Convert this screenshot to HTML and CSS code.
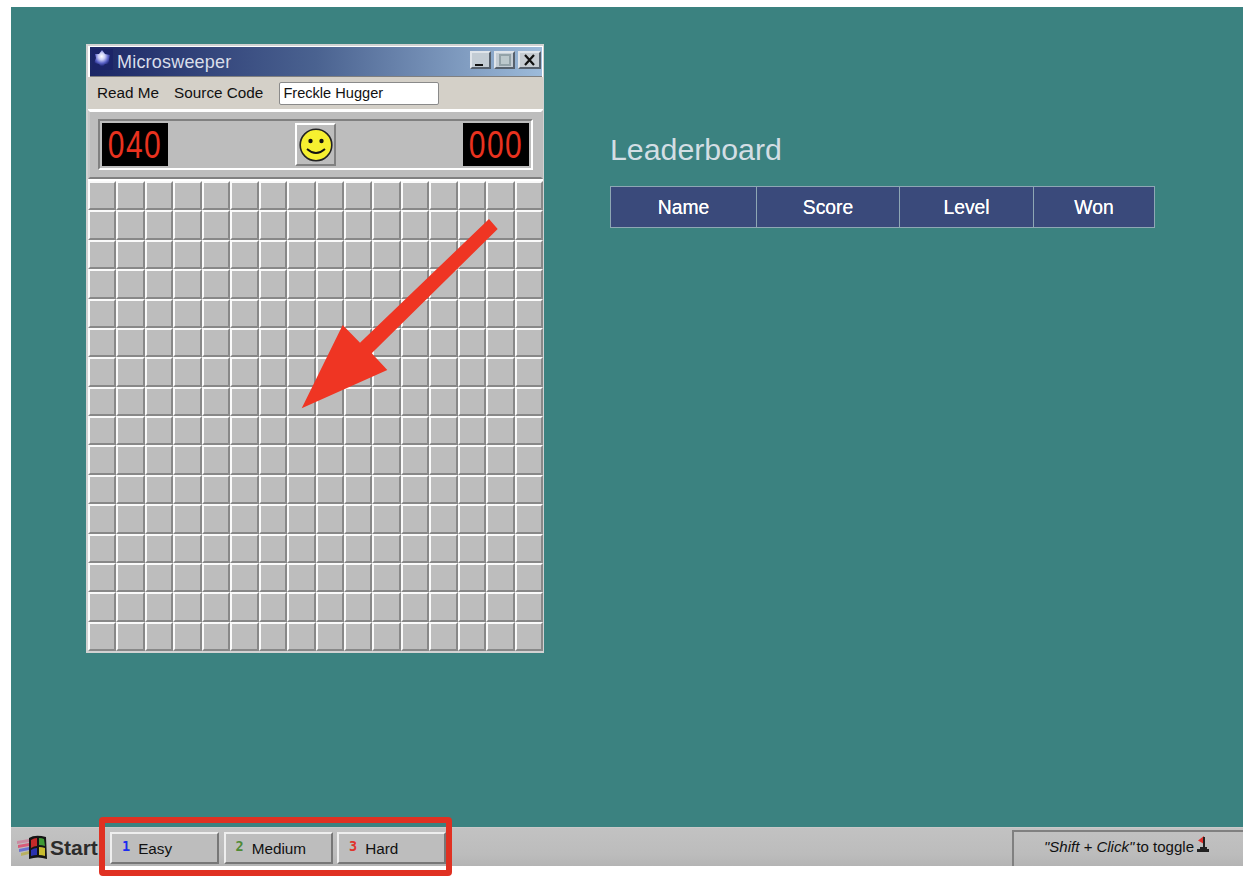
FILE: index.html
```html
<!DOCTYPE html>
<html lang="en">

<head>
    <title>Microsweeper</title>
    <meta charset="utf-8">
    <link rel="stylesheet" href="styles.css">
</head>

<body>
    <div class="desktop">
        <div class="main">
            <div class="window">
                <div class="titlebar">
                    <svg class="title-icon" width="21" height="21" viewBox="0 0 21 21">
                        <defs>
                            <radialGradient id="globe" cx="45%" cy="35%" r="55%">
                                <stop offset="0" stop-color="#fff" />
                                <stop offset="0.35" stop-color="#c9cdf5" />
                                <stop offset="0.7" stop-color="#5a62c8" />
                                <stop offset="1" stop-color="#1a2270" />
                            </radialGradient>
                        </defs>
                        <rect width="21" height="21" fill="#1b2468" />
                        <polygon points="10,1 13,5 18,6 17,11 19,15 13,15 10,19 7,15 2,14 4,9 3,5 7,5" fill="url(#globe)" />
                    </svg>
                    <span class="title-text">Microsweeper</span>
                    <div class="title-buttons">
                        <div class="win-btn"><span class="min-mark"></span></div>
                        <div class="win-btn"><span class="max-mark"></span></div>
                        <div class="win-btn win-btn-close">
                            <svg width="13" height="12" viewBox="0 0 13 12">
                                <path d="M2 1 L11 11 M11 1 L2 11" stroke="#111" stroke-width="2.2" fill="none" />
                            </svg>
                        </div>
                    </div>
                </div>
                <div class="menu">
                    <span class="menu-item">Read Me</span>
                    <span class="menu-item">Source Code</span>
                    <input class="name-input" value="Freckle Hugger">
                </div>
                <div class="panel">
                    <div class="panel-inner">
                        <div class="led"><span class="led-digits">040</span></div>
                        <div class="smiley">
                            <svg width="34" height="34" viewBox="0 0 34 34">
                                <circle cx="17" cy="17" r="15.8" fill="#f6f030" stroke="#222" stroke-width="1.6" />
                                <circle cx="11.5" cy="13" r="2.2" fill="#111" />
                                <circle cx="22.5" cy="13" r="2.2" fill="#111" />
                                <path d="M8 21 Q17 29 26 21" fill="none" stroke="#111" stroke-width="1.8" />
                            </svg>
                        </div>
                        <div class="led"><span class="led-digits">000</span></div>
                    </div>
                </div>
                <div class="board" id="board"></div>
            </div>

            <div class="leaderboard">
                <h1 class="lb-title">Leaderboard</h1>
                <table class="lb-table">
                    <colgroup>
                        <col class="col-name">
                        <col class="col-score">
                        <col class="col-level">
                        <col class="col-won">
                    </colgroup>
                    <tr>
                        <th>Name</th>
                        <th>Score</th>
                        <th>Level</th>
                        <th>Won</th>
                    </tr>
                </table>
            </div>
        </div>

        <div class="taskbar">
            <div class="start">
                <svg width="32" height="26" viewBox="0 0 32 26">
                    <path d="M1 6 L13 4 L13 7 L1 9 Z" fill="#c98aa0" />
                    <path d="M2 10 L13 8 L13 11 L2 13 Z" fill="#d85a78" />
                    <path d="M3 14 L13 12 L13 15 L3 17 Z" fill="#6a70d0" />
                    <path d="M5 18 L13 16 L13 19 L5 21 Z" fill="#b8b060" />
                    <path d="M13 3 Q19 -1 30 2 L31 24 Q22 21 13 24 Z" fill="#141414" />
                    <path d="M15 5 Q18 3 21 3 L21 11 Q18 11 15 13 Z" fill="#c42a2a" />
                    <path d="M23 3 Q26 3 28 4 L29 11 Q26 10 23 10 Z" fill="#3f9a35" />
                    <path d="M15 15 Q18 13 21 13 L21 20 Q18 20 15 21 Z" fill="#2a32b0" />
                    <path d="M23 12 Q26 12 29 13 L29 21 Q26 20 23 20 Z" fill="#c8bc30" />
                </svg>
                <span class="start-text">Start</span>
            </div>
            <div class="level-btn"><span class="level-num num-easy">1</span>Easy</div>
            <div class="level-btn"><span class="level-num num-medium">2</span>Medium</div>
            <div class="level-btn"><span class="level-num num-hard">3</span>Hard</div>
            <div class="status">
                <span class="status-text"><em>"Shift + Click"</em> to toggle</span>
                <svg class="flag" width="14" height="18" viewBox="0 0 14 18">
                    <path d="M8 0 L8 8 L2 4.5 Z" fill="#e0302a" />
                    <rect x="7" y="1" width="2" height="12" fill="#222" />
                    <rect x="4" y="11" width="7" height="2" fill="#222" />
                    <rect x="1" y="13" width="12" height="3" fill="#222" />
                </svg>
            </div>
        </div>
    </div>

    <svg class="arrow" width="1250" height="884" viewBox="0 0 1250 884">
        <polygon points="489,219 497.7,229 371.7,353.3 387.3,370 301.7,408.3 342.7,325 360,342.7" fill="#ef3523" />
    </svg>
    <div class="highlight"></div>

    <script src="board.js"></script>
</body>

</html>
```

FILE: styles.css
```css
html {
    background-color: #fff;
}

body {
    position: relative;
    margin: 0;
    height: 884px;
    overflow: hidden;
    font-family: "Liberation Sans", Arial, sans-serif;
}

.desktop {
    display: flex;
    flex-direction: column;
    height: 859px;
    margin: 7px 7px 0 11px;
    background-color: #3b8280;
}

.main {
    flex: 1;
    display: flex;
    align-items: flex-start;
}

/* game window */
.window {
    width: 455px;
    margin: 37px 0 0 75px;
    border: 2px solid #d2d2d2;
    border-right-width: 1px;
    background-color: #fff;
}

.titlebar {
    display: flex;
    align-items: center;
    height: 29px;
    margin: 1px 1px 0 2px;
    padding: 0 1px 0 2px;
    background: linear-gradient(to right, #1c2766, #4a6290 50%, #9dbbda);
    border-bottom: 1px solid #808080;
}

.title-icon {
    margin-bottom: 5px;
}

.title-text {
    margin-left: 4px;
    padding-top: 2px;
    font-size: 18px;
    letter-spacing: 0.2px;
    color: #d9deea;
}

.title-buttons {
    display: flex;
    gap: 3px;
    margin-left: auto;
    margin-bottom: 4px;
}

.win-btn {
    display: flex;
    align-items: center;
    justify-content: center;
    position: relative;
    width: 17px;
    height: 14px;
    border: 2px solid;
    border-color: #dfe4ea #56606c #56606c #dfe4ea;
    background-color: #c3ccd4;
}

.win-btn-close {
    width: 19px;
    background-color: #c6ccd2;
}

.min-mark {
    position: absolute;
    left: 3px;
    bottom: 1px;
    width: 8px;
    height: 2px;
    background-color: #111;
}

.max-mark {
    width: 8px;
    height: 8px;
    border: 2px solid #93a2a8;
    background-color: #bcc8cc;
}

.menu {
    display: flex;
    align-items: center;
    gap: 15px;
    height: 32px;
    padding-left: 9px;
    background-color: #d4d0c8;
    font-size: 15.3px;
    color: #111;
}

.name-input {
    width: 160px;
    height: 23px;
    margin-left: 1px;
    padding: 0 0 0 3px;
    box-sizing: border-box;
    border: 1px solid #8a8a8a;
    border-radius: 2px;
    background-color: #fff;
    font-family: "Liberation Sans", Arial, sans-serif;
    font-size: 14.6px;
    color: #111;
}

.panel {
    height: 69px;
    margin-top: 1px;
    padding: 7px 8px 0 8px;
    box-sizing: border-box;
    border: 2px solid;
    border-color: #fff #bdbdbd #808080 #c8c8c8;
    background-color: #bdbdbd;
}

.panel-inner {
    display: flex;
    align-items: center;
    justify-content: space-between;
    height: 51px;
    padding: 0 2px;
    box-sizing: border-box;
    border: 2px solid;
    border-color: #808080 #fff #fff #808080;
}

.led {
    width: 66px;
    height: 43px;
    background-color: #000;
    font-size: 30px;
    line-height: 43px;
    text-align: center;
    color: #e8321f;
}

.led-digits {
    display: inline-block;
    letter-spacing: 1.5px;
    transform: scaleY(1.3);
}

.smiley {
    display: flex;
    align-items: center;
    justify-content: center;
    width: 37px;
    height: 39px;
    border: 2px solid;
    border-color: #fff #808080 #808080 #fff;
    background-color: #bdbdbd;
}

.board {
    display: grid;
    grid-template-columns: repeat(16, 1fr);
    grid-template-rows: repeat(16, 1fr);
    width: 455px;
    height: 470px;
    margin-top: 2px;
    background-color: #bdbdbd;
}

.cell {
    border: 2px solid;
    border-color: #fafafa #888 #888 #fafafa;
    background-color: #bdbdbd;
}

/* right side */
.leaderboard {
    margin: 126px 0 0 66px;
}

.lb-title {
    margin: 0 0 19px 0;
    font-size: 30.3px;
    font-weight: normal;
    line-height: 34px;
    color: #d3dee4;
}

.lb-table {
    width: 544px;
    height: 42px;
    border-collapse: collapse;
    table-layout: fixed;
}

.lb-table th {
    padding: 2px 0 0 0;
    border: 1px solid #8ea7b4;
    background-color: #3a4a7b;
    font-size: 19.3px;
    font-weight: normal;
    color: #fff;
    text-shadow: 0 0 0.4px #fff;
}

.col-name {
    width: 146px;
}

.col-score {
    width: 143px;
}

.col-level {
    width: 134px;
}

.col-won {
    width: 121px;
}

/* bottom bar */
.taskbar {
    display: flex;
    align-items: flex-end;
    height: 39px;
    padding-bottom: 2px;
    box-sizing: border-box;
    background: linear-gradient(to bottom, #c2c2c2, #bcbcbc 70%, #b4b4b4);
    border-top: 1px solid #c9c9c9;
}

.start {
    display: flex;
    align-items: center;
    width: 99px;
    height: 33px;
    padding-left: 5px;
    box-sizing: border-box;
}

.start-text {
    margin-left: 2px;
    font-size: 21px;
    font-weight: bold;
    color: #2c2c2c;
}

.level-btn {
    display: flex;
    align-items: center;
    width: 109px;
    height: 32px;
    margin-right: 4.5px;
    padding: 2px 0 0 10px;
    box-sizing: border-box;
    border: 2px solid;
    border-color: #eee #777 #777 #eee;
    background-color: #bdbdbd;
    font-size: 15.3px;
    color: #111;
}

.level-num {
    margin: -6px 8px 0 0;
    font-family: "DejaVu Sans Mono", monospace;
    font-size: 13.5px;
    font-weight: bold;
}

.num-easy {
    color: #1b2cf0;
}

.num-medium {
    color: #4f8a35;
}

.num-hard {
    color: #e0342c;
}

.status {
    display: flex;
    align-items: center;
    gap: 2px;
    width: 231px;
    height: 36px;
    margin: 0 0 -2px auto;
    padding-left: 30px;
    box-sizing: border-box;
    border-top: 2px solid #808080;
    border-left: 2px solid #808080;
    font-size: 15px;
    color: #111;
}

.status-text {
    padding-bottom: 6px;
}

.status em {
    margin-right: -2px;
}

.flag {
    margin-bottom: 8px;
}

/* annotations drawn over the page */
.arrow {
    position: absolute;
    left: 0;
    top: 0;
    pointer-events: none;
}

.highlight {
    position: absolute;
    left: 99px;
    top: 817px;
    width: 353px;
    height: 59px;
    box-sizing: border-box;
    border: 6px solid #e03122;
    border-radius: 4px;
}
```

FILE: board.js
```js
// 16 x 16 closed cells
var board = document.getElementById('board');
for (var i = 0; i < 256; i++) {
    var cell = document.createElement('div');
    cell.className = 'cell';
    board.appendChild(cell);
}
```
